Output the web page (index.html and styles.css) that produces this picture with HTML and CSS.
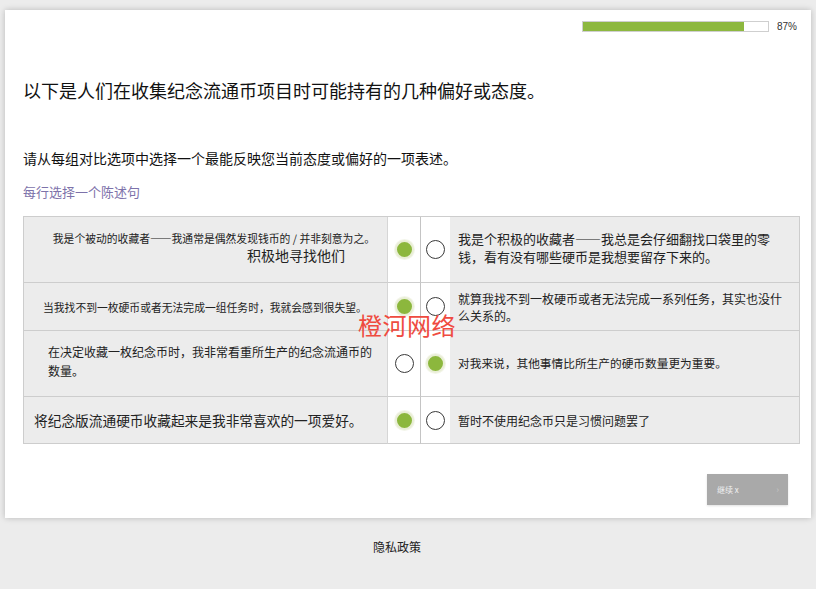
FILE: index.html
```html
<!DOCTYPE html>
<html lang="zh-CN">
<head>
<meta charset="utf-8">
<title>问卷</title>
<link rel="stylesheet" href="styles.css">
</head>
<body>
<div class="card">
  <div class="progress">
    <div class="bar"><div class="fill" style="width:87%"></div></div>
    <span class="pct">87%</span>
  </div>

  <h1 class="title">以下是人们在收集纪念流通币项目时可能持有的几种偏好或态度。</h1>
  <p class="instr">请从每组对比选项中选择一个最能反映您当前态度或偏好的一项表述。</p>
  <p class="hint">每行选择一个陈述句</p>

  <div class="grid">
    <div class="cell left r1">
      <div class="l1">我是个被动的收藏者——我通常是偶然发现钱币的 / 并非刻意为之。</div>
      <div class="l2">积极地寻找他们</div>
    </div>
    <div class="cell radio"><span class="dot on"></span></div>
    <div class="cell radio second"><span class="dot"></span></div>
    <div class="cell right r1t">我是个积极的收藏者——我总是会仔细翻找口袋里的零<br>钱，看有没有哪些硬币是我想要留存下来的。</div>

    <div class="cell left r2">当我找不到一枚硬币或者无法完成一组任务时，我就会感到很失望。</div>
    <div class="cell radio"><span class="dot on"></span></div>
    <div class="cell radio second"><span class="dot"></span></div>
    <div class="cell right r2t">就算我找不到一枚硬币或者无法完成一系列任务，其实也没什<br>么关系的。</div>

    <div class="cell left r3">在决定收藏一枚纪念币时，我非常看重所生产的纪念流通币的<br>数量。</div>
    <div class="cell radio"><span class="dot"></span></div>
    <div class="cell radio second"><span class="dot on"></span></div>
    <div class="cell right r3t">对我来说，其他事情比所生产的硬币数量更为重要。</div>

    <div class="cell left r4 last">将纪念版流通硬币收藏起来是我非常喜欢的一项爱好。</div>
    <div class="cell radio last"><span class="dot on"></span></div>
    <div class="cell radio second last"><span class="dot"></span></div>
    <div class="cell right r4t last">暂时不使用纪念币只是习惯问题罢了</div>
  </div>

  <div class="actions">
    <button class="next">继续 x<span class="arrow">›</span></button>
  </div>

  <div class="watermark">橙河网络</div>
</div>

<footer class="foot">隐私政策</footer>
</body>
</html>
```

FILE: styles.css
```css
* { box-sizing: border-box; }

html, body {
  margin: 0;
  padding: 0;
}

body {
  background: #ececec;
  font-family: "Noto Sans CJK SC", "Noto Sans", "Liberation Sans", sans-serif;
  color: #222;
  width: 816px;
  height: 589px;
  overflow: hidden;
}

.card {
  position: relative;
  margin: 10px 5px 0 5px;
  width: 806px;
  height: 508px;
  background: #fff;
  box-shadow: 0 0 6px rgba(0, 0, 0, 0.22);
  padding: 11px 14px 0 18px;
}

/* progress indicator */
.progress {
  display: flex;
  justify-content: flex-end;
  align-items: center;
  gap: 8px;
  height: 11px;
}

.bar {
  width: 187px;
  height: 11px;
  border: 1px solid #cfcfcf;
  background: #fff;
}

.fill {
  height: 100%;
  background: #8db83f;
}

.pct {
  font-family: "Liberation Sans", Arial, sans-serif;
  font-size: 10px;
  color: #333;
  line-height: 11px;
}

.title {
  margin: 46px 0 0 0;
  font-size: 18px;
  font-weight: normal;
  line-height: 24px;
  color: #111;
}

.instr {
  margin: 46px 0 0 0;
  font-size: 14px;
  line-height: 20px;
  color: #111;
}

.hint {
  margin: 15px 0 0 0;
  font-size: 13px;
  line-height: 18px;
  color: #7d72aa;
}

/* statement pairs */
.grid {
  margin-top: 15px;
  width: 777px;
  display: grid;
  grid-template-columns: 364px 33px 30px 350px;
  grid-template-rows: 66px 48px 66px 47px;
  border-top: 1px solid #cdcdcd;
}

.cell {
  border-bottom: 1px solid #cdcdcd;
  display: flex;
  align-items: center;
}

.left {
  background: #ececec;
  border-left: 1px solid #cdcdcd;
}

.right {
  background: #ececec;
  border-right: 1px solid #cdcdcd;
  padding-left: 8px;
  white-space: nowrap;
}

.radio {
  background: #fff;
  justify-content: center;
  border-left: 1px solid #d6d6d6;
}

.radio.second {
  border-left: 1px solid #c4c4c4;
}

.r1 {
  flex-direction: column;
  align-items: flex-end;
  justify-content: center;
  padding-right: 12px;
  padding-bottom: 4px;
}

.r1 .l1 {
  font-size: 10.8px;
  line-height: 16px;
  white-space: nowrap;
}

.r1 .l2 {
  font-size: 14px;
  line-height: 19px;
  margin-right: 30px;
}

.r2 {
  font-size: 10.8px;
  padding-left: 19px;
  white-space: nowrap;
}

.r3 {
  font-size: 12px;
  line-height: 19px;
  padding-left: 24px;
  padding-bottom: 6px;
  white-space: nowrap;
}

.r4 {
  font-size: 13.7px;
  padding-left: 10px;
  white-space: nowrap;
}

.r1t {
  font-size: 13px;
  line-height: 18px;
  padding-bottom: 4px;
}

.r2t {
  font-size: 12px;
  line-height: 17px;
}

.r3t {
  font-size: 11.7px;
  padding-bottom: 2px;
}

.r4t {
  font-size: 12px;
}

.dot {
  display: block;
  width: 19px;
  height: 19px;
  border-radius: 50%;
  border: 1px solid #3a3a3a;
  background: #fff;
}

.dot.on {
  width: 19px;
  height: 19px;
  border: 2px solid #e9eed6;
  background: #8cb73d;
  box-shadow: 0 0 0 1px #f3f5ea;
}

/* navigation */
.actions {
  display: flex;
  justify-content: flex-end;
  margin-top: 30px;
  padding-right: 9px;
}

.next {
  position: relative;
  width: 81px;
  height: 31px;
  border: none;
  background: #a9a9a9;
  color: #f2f2f2;
  font-family: "Noto Sans CJK SC", sans-serif;
  font-size: 8px;
  text-align: left;
  padding: 0 0 0 10px;
  box-shadow: 0 1px 2px rgba(0, 0, 0, 0.12);
}

.next .arrow {
  position: absolute;
  right: 9px;
  top: 9px;
  font-size: 9px;
  color: #c4c4c4;
}

.watermark {
  position: absolute;
  left: 353px;
  top: 300px;
  font-size: 24px;
  line-height: 30px;
  color: #ef4b40;
  letter-spacing: 0.5px;
}

.foot {
  text-align: center;
  font-size: 12px;
  line-height: 16px;
  color: #222;
  margin-top: 21px;
  padding-right: 22px;
}
```
